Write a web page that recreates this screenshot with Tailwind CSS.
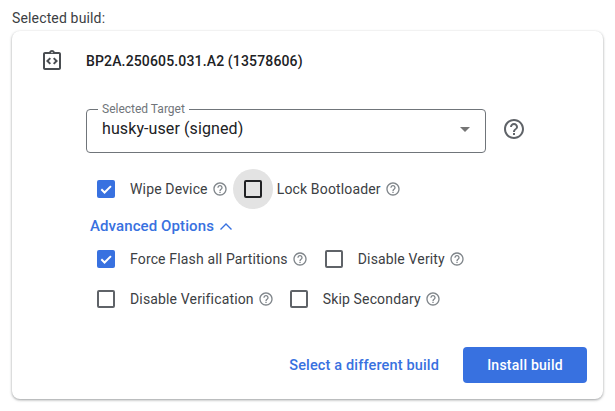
<!DOCTYPE html>
<html lang="en">
<head>
  <meta charset="UTF-8" />
  <title>Selected build</title>
  <script src="https://cdn.jsdelivr.net/npm/@tailwindcss/browser@4"></script>
</head>
<body class="bg-white font-['Roboto',sans-serif] w-[615px] h-[411px] overflow-hidden">

  <div class="px-3">
    <p class="h-[31px] pt-[9px] text-[14px] leading-[18px] tracking-[0.15px] text-[#3c4043]">Selected build:</p>

    <div class="w-[591px] h-[368px] bg-white rounded-lg shadow-[0_1px_3px_rgba(60,64,67,0.4),0_1px_2px_rgba(60,64,67,0.15)] pl-[28px] pt-[18px]">

      <!-- build -->
      <div class="flex items-center gap-[22px] h-[24px]">
        <svg class="w-6 h-6" viewBox="0 0 24 24" fill="#4a4e52">
          <path d="M11 14.17 8.83 12 11 9.83 9.59 8.41 6 12l3.59 3.59zm3.41 1.42L18 12l-3.59-3.59L13 9.83 15.17 12 13 14.17z"/>
          <path d="M19 3h-4.18C14.4 1.84 13.3 1 12 1s-2.4.84-2.82 2H5c-1.1 0-2 .9-2 2v14c0 1.1.9 2 2 2h14c1.1 0 2-.9 2-2V5c0-1.1-.9-2-2-2zm-7-.25c.41 0 .75.34.75.75s-.34.75-.75.75-.75-.34-.75-.75.34-.75.75-.75zM19 19H5V5h14v14z"/>
        </svg>
        <span class="text-[14px] font-medium tracking-[0.15px] text-[#202124]">BP2A.250605.031.A2 (13578606)</span>
      </div>

      <!-- target -->
      <div class="flex items-center mt-[36px] ml-[46px]">
        <div class="relative w-[400px] h-[44px] border border-[#70757a] rounded flex items-center justify-between pl-[15px] pr-[15px]">
          <span class="absolute -top-[8px] left-[11px] bg-white px-[4px] text-[12px] leading-[14px] text-[#70757a]">Selected Target</span>
          <span class="text-[16px] tracking-[0.1px] text-[#202124] mt-[-4px]">husky-user (signed)</span>
          <span class="w-0 h-0 mb-[4px] border-x-[5px] border-x-transparent border-t-[5px] border-t-[#757575]"></span>
        </div>
        <svg class="w-6 h-6 ml-[16px] mb-[4px]" viewBox="0 0 24 24" fill="#5f6368">
          <path d="M11 18h2v-2h-2v2zm1-16C6.48 2 2 6.48 2 12s4.48 10 10 10 10-4.48 10-10S17.52 2 12 2zm0 18c-4.41 0-8-3.59-8-8s3.59-8 8-8 8 3.59 8 8-3.59 8-8 8zm0-14c-2.21 0-4 1.79-4 4h2c0-1.1.9-2 2-2s2 .9 2 2c0 2-3 1.75-3 5h2c0-2.25 3-2.5 3-5 0-2.21-1.79-4-4-4z"/>
        </svg>
      </div>

      <div class="ml-[46px]">
        <!-- row 1 -->
        <div class="flex items-center h-[40px] mt-[16px] text-[14px] text-[#3c4043] tracking-[0.15px]">
          <span class="w-10 h-10 flex items-center justify-center">
            <span class="w-[18px] h-[18px] bg-[#3871e0] rounded-[2px] flex items-center justify-center">
              <svg class="w-[14px] h-[14px]" viewBox="0 0 24 24" fill="none" stroke="#fff" stroke-width="3.4"><path d="M4 12.5l5.5 5.5L20.5 7"/></svg>
            </span>
          </span>
          <span class="ml-1">Wipe Device</span>
          <svg class="w-4 h-4 ml-1" viewBox="0 0 24 24" fill="#80868b"><path d="M11 18h2v-2h-2v2zm1-16C6.48 2 2 6.48 2 12s4.48 10 10 10 10-4.48 10-10S17.52 2 12 2zm0 18c-4.41 0-8-3.59-8-8s3.59-8 8-8 8 3.59 8 8-3.59 8-8 8zm0-14c-2.21 0-4 1.79-4 4h2c0-1.1.9-2 2-2s2 .9 2 2c0 2-3 1.75-3 5h2c0-2.25 3-2.5 3-5 0-2.21-1.79-4-4-4z"/></svg>
          <span class="w-10 h-10 ml-[5px] rounded-full bg-[#e3e3e3] flex items-center justify-center">
            <span class="w-[18px] h-[18px] border-2 border-[#202124] rounded-[2px]"></span>
          </span>
          <span class="ml-1">Lock Bootloader</span>
          <svg class="w-4 h-4 ml-1" viewBox="0 0 24 24" fill="#80868b"><path d="M11 18h2v-2h-2v2zm1-16C6.48 2 2 6.48 2 12s4.48 10 10 10 10-4.48 10-10S17.52 2 12 2zm0 18c-4.41 0-8-3.59-8-8s3.59-8 8-8 8 3.59 8 8-3.59 8-8 8zm0-14c-2.21 0-4 1.79-4 4h2c0-1.1.9-2 2-2s2 .9 2 2c0 2-3 1.75-3 5h2c0-2.25 3-2.5 3-5 0-2.21-1.79-4-4-4z"/></svg>
        </div>

        <!-- advanced -->
        <div class="flex items-center h-[20px] mt-[7px] ml-[4px] text-[15px] tracking-[0.1px] font-medium text-[#3871e0]">
          <span>Advanced Options</span>
          <svg class="w-6 h-6 mt-[2px] shrink-0" viewBox="0 0 24 24" fill="none" stroke="#3871e0" stroke-width="1.4"><path d="M6.5 14.5 12 9l5.5 5.5"/></svg>
        </div>

        <!-- row 2 -->
        <div class="flex items-center h-[40px] mt-[3px] text-[14px] text-[#3c4043] tracking-[0.15px]">
          <span class="w-10 h-10 flex items-center justify-center">
            <span class="w-[18px] h-[18px] bg-[#3871e0] rounded-[2px] flex items-center justify-center">
              <svg class="w-[14px] h-[14px]" viewBox="0 0 24 24" fill="none" stroke="#fff" stroke-width="3.4"><path d="M4 12.5l5.5 5.5L20.5 7"/></svg>
            </span>
          </span>
          <span class="ml-1">Force Flash all Partitions</span>
          <svg class="w-4 h-4 ml-1" viewBox="0 0 24 24" fill="#80868b"><path d="M11 18h2v-2h-2v2zm1-16C6.48 2 2 6.48 2 12s4.48 10 10 10 10-4.48 10-10S17.52 2 12 2zm0 18c-4.41 0-8-3.59-8-8s3.59-8 8-8 8 3.59 8 8-3.59 8-8 8zm0-14c-2.21 0-4 1.79-4 4h2c0-1.1.9-2 2-2s2 .9 2 2c0 2-3 1.75-3 5h2c0-2.25 3-2.5 3-5 0-2.21-1.79-4-4-4z"/></svg>
          <span class="w-10 h-10 ml-[6px] flex items-center justify-center">
            <span class="w-[18px] h-[18px] border-2 border-[#5f6368] rounded-[2px]"></span>
          </span>
          <span class="ml-1">Disable Verity</span>
          <svg class="w-4 h-4 ml-1" viewBox="0 0 24 24" fill="#80868b"><path d="M11 18h2v-2h-2v2zm1-16C6.48 2 2 6.48 2 12s4.48 10 10 10 10-4.48 10-10S17.52 2 12 2zm0 18c-4.41 0-8-3.59-8-8s3.59-8 8-8 8 3.59 8 8-3.59 8-8 8zm0-14c-2.21 0-4 1.79-4 4h2c0-1.1.9-2 2-2s2 .9 2 2c0 2-3 1.75-3 5h2c0-2.25 3-2.5 3-5 0-2.21-1.79-4-4-4z"/></svg>
        </div>

        <!-- row 3 -->
        <div class="flex items-center h-[40px] text-[14px] text-[#3c4043] tracking-[0.15px]">
          <span class="w-10 h-10 flex items-center justify-center">
            <span class="w-[18px] h-[18px] border-2 border-[#5f6368] rounded-[2px]"></span>
          </span>
          <span class="ml-1">Disable Verification</span>
          <svg class="w-4 h-4 ml-1" viewBox="0 0 24 24" fill="#80868b"><path d="M11 18h2v-2h-2v2zm1-16C6.48 2 2 6.48 2 12s4.48 10 10 10 10-4.48 10-10S17.52 2 12 2zm0 18c-4.41 0-8-3.59-8-8s3.59-8 8-8 8 3.59 8 8-3.59 8-8 8zm0-14c-2.21 0-4 1.79-4 4h2c0-1.1.9-2 2-2s2 .9 2 2c0 2-3 1.75-3 5h2c0-2.25 3-2.5 3-5 0-2.21-1.79-4-4-4z"/></svg>
          <span class="w-10 h-10 ml-[5px] flex items-center justify-center">
            <span class="w-[18px] h-[18px] border-2 border-[#5f6368] rounded-[2px]"></span>
          </span>
          <span class="ml-1">Skip Secondary</span>
          <svg class="w-4 h-4 ml-1" viewBox="0 0 24 24" fill="#80868b"><path d="M11 18h2v-2h-2v2zm1-16C6.48 2 2 6.48 2 12s4.48 10 10 10 10-4.48 10-10S17.52 2 12 2zm0 18c-4.41 0-8-3.59-8-8s3.59-8 8-8 8 3.59 8 8-3.59 8-8 8zm0-14c-2.21 0-4 1.79-4 4h2c0-1.1.9-2 2-2s2 .9 2 2c0 2-3 1.75-3 5h2c0-2.25 3-2.5 3-5 0-2.21-1.79-4-4-4z"/></svg>
        </div>
      </div>

      <!-- actions -->
      <div class="flex items-center justify-end gap-6 mt-[28px] pr-[16px] font-medium">
        <a class="mt-[2px] text-[14.5px] tracking-[0.15px] text-[#3871e0]">Select a different build</a>
        <button class="w-[124px] h-[36px] bg-[#3871e0] text-[14px] tracking-[0.25px] text-white rounded">Install build</button>
      </div>
    </div>
  </div>

</body>
</html>
